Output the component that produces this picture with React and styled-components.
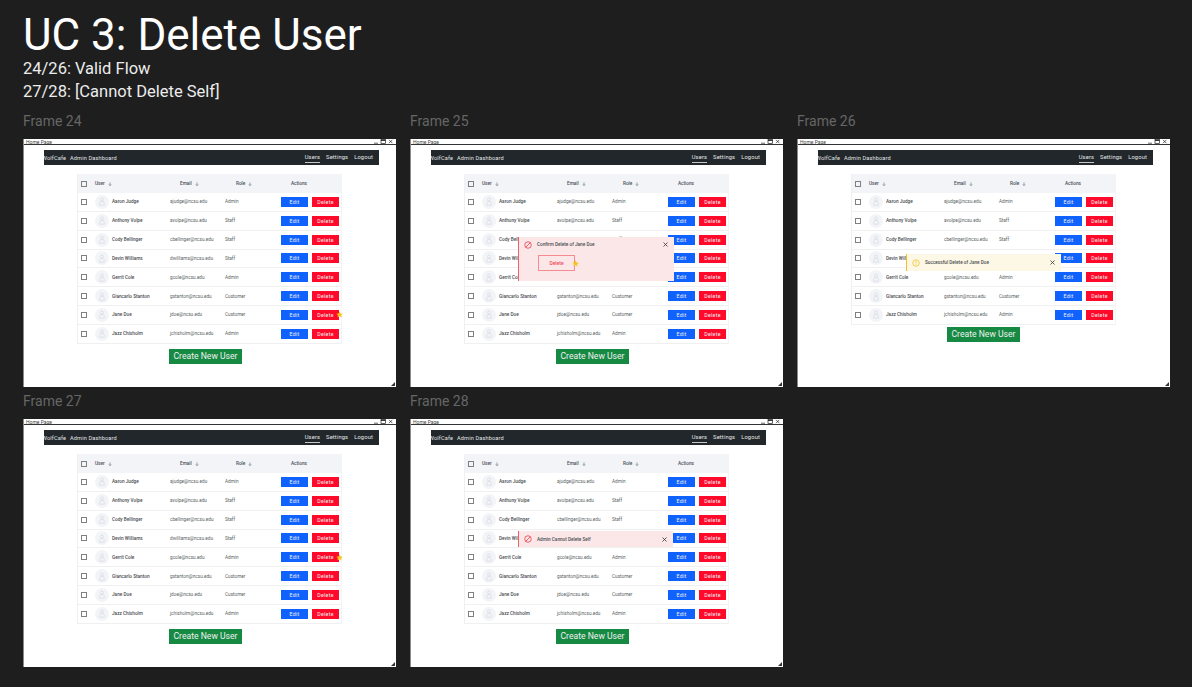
import React from "react";
import styled, { createGlobalStyle } from "styled-components";

const Global = createGlobalStyle`
  html, body { margin: 0; padding: 0; background: #1e1e1e; }
  body { font-family: Roboto, "Liberation Sans", sans-serif; width: 1192px; height: 687px; overflow: hidden; }
  * { box-sizing: border-box; }
`;

const Page = styled.div`
  padding: 13px 0 0 23px;
  display: flex;
  flex-direction: column;
`;
const Title = styled.h1`
  margin: 0;
  font-size: 44px;
  line-height: 44px;
  font-weight: 400;
  color: #fff;
`;
const Sub = styled.p`
  margin: 0;
  font-size: 16.5px;
  line-height: 23px;
  color: #ececec;
`;
const Board = styled.div`
  margin-top: 9px;
  display: grid;
  grid-template-columns: repeat(3, 373px);
  column-gap: 14px;
  row-gap: 5px;
`;
const FrameLabel = styled.div`
  height: 27px;
  font-size: 14px;
  line-height: 18px;
  color: #666;
`;
const Win = styled.div`
  position: relative;
  width: 373px;
  height: 248px;
  background: #fff;
  display: flex;
  flex-direction: column;
  border-left: 1px solid #8a8a8a;
`;
const TitleBar = styled.div`
  height: 6px;
  display: flex;
  align-items: center;
  padding: 0 1px 0 2px;
  border-bottom: 1px solid #333;
  font-size: 5px;
  color: #444;
  justify-content: space-between;
`;
const Grip = styled.svg`
  position: absolute;
  right: 1px;
  bottom: 1px;
`;
const Nav = styled.div`
  margin: 5px 17px 0 20px;
  height: 15px;
  background: #21272a;
  color: #e4e6e8;
  font-size: 5.6px;
  display: flex;
  align-items: center;
  justify-content: space-between;
  letter-spacing: 0.14px;
  overflow: hidden;
`;
const Brand = styled.div`
  display: flex;
  gap: 4px;
  margin-left: -2px;
`;
const Links = styled.div`
  display: flex;
  align-self: flex-start;
  gap: 6px;
  padding-right: 6px;
  height: 13px;
  font-size: 5.75px;
`;
const Link = styled.div`
  display: flex;
  align-items: center;
  height: 100%;
  padding-top: 1px;
  border-bottom: 1px solid ${(p) => (p.$active ? "#c8c8c8" : "transparent")};
`;
const Table = styled.div`
  margin: 9px 0 0 53px;
  width: 265px;
  border-left: 1px solid #f0f0f0;
  border-right: 1px solid #f4f4f4;
`;
const cols = "17px 75px 55px 56px 1fr";
const Head = styled.div`
  height: 19px;
  background: #f2f4f8;
  display: grid;
  grid-template-columns: ${cols};
  align-items: center;
  font-size: 4.7px;
  font-weight: 500;
  color: #4a4f54;
`;
const HeadCell = styled.div`
  display: flex;
  align-items: center;
  gap: 3px;
  padding-left: ${(p) => p.$pad || 0}px;
`;
const Row = styled.div`
  height: 18.85px;
  display: grid;
  grid-template-columns: ${cols};
  align-items: center;
  border-bottom: 1px solid #f0f0f0;
  font-size: 4.7px;
  color: #5a5f64;
`;
const Check = styled.div`
  width: 6px;
  height: 6px;
  border: 0.8px solid #808080;
  margin-left: 3px;
`;
const UserCell = styled.div`
  display: flex;
  align-items: center;
  gap: 3px;
  font-weight: 500;
  color: #4a4e52;
`;
const Avatar = styled.div`
  width: 14px;
  height: 14px;
  border-radius: 50%;
  background: #f2f4f8;
  display: flex;
  align-items: center;
  justify-content: center;
`;
const Actions = styled.div`
  display: flex;
  gap: 4px;
`;
const Btn = styled.div`
  position: relative;
  width: 27px;
  height: 10px;
  background: ${(p) => (p.$kind === "danger" ? "#ff0a2b" : "#0f62fe")};
  color: #f0f0f0;
  font-size: 5.2px;
  letter-spacing: 0.3px;
  display: flex;
  align-items: center;
  justify-content: center;
`;
const Create = styled.div`
  margin: ${(p) => (p.$moved ? "2px 0 0 149px" : "5px 0 0 145px")};
  width: 73px;
  height: 15px;
  background: #168a43;
  color: #f0f0f0;
  font-size: 8.6px;
  display: flex;
  align-items: center;
  justify-content: center;
`;
const Star = styled.svg`
  position: absolute;
  right: ${(p) => p.$right}px;
  top: ${(p) => p.$top}px;
`;
const Alert = styled.div`
  position: absolute;
  left: ${(p) => p.$left}px;
  top: ${(p) => p.$top}px;
  width: ${(p) => p.$w}px;
  height: ${(p) => p.$h}px;
  background: ${(p) => (p.$warn ? "#fdf7e6" : "#fbe7e8")};
  border-left: 1px solid ${(p) => (p.$warn ? "#f1c21b" : "#ee5f6b")};
  font-size: 4.7px;
  font-weight: 500;
  color: #4a4e52;
`;
const AlertLine = styled.div`
  display: flex;
  align-items: center;
  height: ${(p) => p.$h}px;
  padding: 0 6px 0 5px;
  gap: 5px;
`;
const AlertText = styled.div`
  flex: 1;
`;
const AlertBtn = styled.div`
  position: relative;
  margin: 3px 0 0 19px;
  width: 37px;
  height: 16px;
  border: 1px solid #f58b92;
  color: #f0485a;
  font-size: 5px;
  display: flex;
  align-items: center;
  justify-content: center;
`;

const users = [
  ["Aaron Judge", "ajudge@ncsu.edu", "Admin"],
  ["Anthony Volpe", "avolpe@ncsu.edu", "Staff"],
  ["Cody Bellinger", "cbellinger@ncsu.edu", "Staff"],
  ["Devin Williams", "dwilliams@ncsu.edu", "Staff"],
  ["Gerrit Cole", "gcole@ncsu.edu", "Admin"],
  ["Giancarlo Stanton", "gstanton@ncsu.edu", "Customer"],
  ["Jane Doe", "jdoe@ncsu.edu", "Customer"],
  ["Jazz Chisholm", "jchisholm@ncsu.edu", "Admin"],
];

const StarIcon = ({ size = 7, right = -4, top = 1.5 }) => (
  <Star $right={right} $top={top} width={size} height={size} viewBox="0 0 24 24">
    <path fill="#f5c518" d="M12 1l3.4 7.3 7.9 1-5.8 5.4 1.5 7.9L12 17.8l-7 3.8 1.5-7.9L.7 9.3l7.9-1z" />
  </Star>
);
const Person = () => (
  <svg width="8" height="9" viewBox="0 0 16 18" fill="none" stroke="#cfd3d9" strokeWidth="1.1">
    <circle cx="8" cy="5" r="3" />
    <path d="M3.5 16.5v-3.5a4.5 4.5 0 0 1 9 0v3.5z" />
  </svg>
);
const Arrow = () => (
  <svg width="4" height="4" viewBox="0 0 10 10" fill="none" stroke="#5a5f64" strokeWidth="1.4">
    <path d="M5 1v8M2 6l3 3 3-3" />
  </svg>
);
const Close = () => (
  <svg width="5" height="5" viewBox="0 0 10 10" stroke="#333" strokeWidth="1.6">
    <path d="M1 1l8 8M9 1l-8 8" />
  </svg>
);
const Block = () => (
  <svg width="8" height="8" viewBox="0 0 16 16" fill="none" stroke="#e8303f" strokeWidth="1.5">
    <circle cx="8" cy="8" r="6.5" />
    <path d="M3.5 12.5l9-9" />
  </svg>
);
const Warn = () => (
  <svg width="8" height="8" viewBox="0 0 16 16" fill="none" stroke="#efc020" strokeWidth="1.5">
    <circle cx="8" cy="8" r="6.5" />
    <path d="M8 4v5M8 10.5v1.5" />
  </svg>
);
const WinButtons = () => (
  <svg width="22" height="5" viewBox="0 0 22 5" fill="none" stroke="#222" strokeWidth="0.7">
    <path d="M1 4.2h4" />
    <rect x="8" y="0.6" width="4.5" height="3.8" />
    <path d="M8 1.4h4.5" strokeWidth="1" />
    <path d="M16 .8l3.4 3.4M19.4 .8L16 4.2" />
  </svg>
);

const FrameView = ({ n, star, hide, children }) => (
  <div>
    <FrameLabel>Frame {n}</FrameLabel>
    <Win>
      <TitleBar>
        <span>Home Page</span>
        <WinButtons />
      </TitleBar>
      <Nav>
        <Brand>
          <span>WolfCafe</span>
          <span>Admin Dashboard</span>
        </Brand>
        <Links>
          <Link $active>Users</Link>
          <Link>Settings</Link>
          <Link>Logout</Link>
        </Links>
      </Nav>
      <Table>
        <Head>
          <Check />
          <HeadCell>User <Arrow /></HeadCell>
          <HeadCell $pad={10}>Email <Arrow /></HeadCell>
          <HeadCell $pad={11}>Role <Arrow /></HeadCell>
          <HeadCell $pad={10}>Actions</HeadCell>
        </Head>
        {users
          .filter((u) => u[0] !== hide)
          .map((u) => (
            <Row key={u[0]}>
              <Check />
              <UserCell>
                <Avatar><Person /></Avatar>
                {u[0]}
              </UserCell>
              <div>{u[1]}</div>
              <div>{u[2]}</div>
              <Actions>
                <Btn>Edit</Btn>
                <Btn $kind="danger">
                  Delete
                  {star === u[0] && <StarIcon />}
                </Btn>
              </Actions>
            </Row>
          ))}
      </Table>
      <Create $moved={!!hide}>Create New User</Create>
      <Grip width="4" height="4" viewBox="0 0 4 4" fill="#333">
        <path d="M4 0v4H0z" />
      </Grip>
      {children}
    </Win>
  </div>
);

export default function App() {
  return (
    <Page>
      <Global />
      <Title>UC 3: Delete User</Title>
      <Sub>24/26: Valid Flow</Sub>
      <Sub>27/28: [Cannot Delete Self]</Sub>
      <Board>
        <FrameView n={24} star="Jane Doe" />
        <FrameView n={25}>
          <Alert $left={107} $top={98} $h={44} $w={156}>
            <AlertLine $h={15}>
              <Block />
              <AlertText>Confirm Delete of Jane Doe</AlertText>
              <Close />
            </AlertLine>
            <AlertBtn>
              Delete
              <StarIcon size={7} right={-5} top={3.5} />
            </AlertBtn>
          </Alert>
        </FrameView>
        <FrameView n={26} hide="Jane Doe">
          <Alert $left={108} $top={115} $h={17} $w={155} $warn>
            <AlertLine $h={17}>
              <Warn />
              <AlertText>Successful Delete of Jane Doe</AlertText>
              <Close />
            </AlertLine>
          </Alert>
        </FrameView>
        <FrameView n={27} star="Gerrit Cole" />
        <FrameView n={28}>
          <Alert $left={107} $top={112} $h={16} $w={155}>
            <AlertLine $h={16}>
              <Block />
              <AlertText>Admin Cannot Delete Self</AlertText>
              <Close />
            </AlertLine>
          </Alert>
        </FrameView>
      </Board>
    </Page>
  );
}
